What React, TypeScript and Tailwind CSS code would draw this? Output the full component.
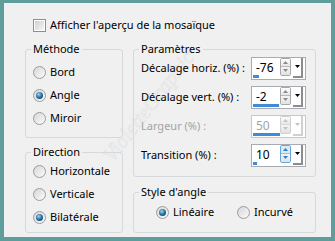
import React from 'react';

function Radio({ checked }: { checked?: boolean }) {
    return (
        <span className="w-[13px] h-[13px] rounded-full border border-[#9c9c9c] bg-[linear-gradient(135deg,#d6d6d6,#fbfbfb)] flex items-center justify-center shrink-0">
            {checked && (
                <span className="w-[7px] h-[7px] rounded-full bg-[radial-gradient(circle_at_40%_35%,#9ad6f7,#1d6597_55%,#0c3a62)]" />
            )}
        </span>
    );
}

function RadioRow({ label, checked }: { label: string; checked?: boolean }) {
    return (
        <div className="flex items-center gap-[4px] h-[16px] whitespace-nowrap">
            <Radio checked={checked} />
            <span>{label}</span>
        </div>
    );
}

function Arrow({ up, color }: { up?: boolean; color: string }) {
    return (
        <svg width="5" height="3" viewBox="0 0 5 3">
            <path d={up ? 'M0 3 L2.5 0 L5 3 Z' : 'M0 0 L2.5 3 L5 0 Z'} fill={color} />
        </svg>
    );
}

function SpinBox({ value, bar, disabled, hot }: { value: string; bar: number; disabled?: boolean; hot?: boolean }) {
    const arrowColor = disabled ? '#c4c4c4' : hot ? '#2f7fc4' : '#8a8a8a';
    return (
        <div className={`relative w-[55px] h-[23px] shrink-0 border bg-white flex items-center ${disabled ? 'border-[#c9c9c9]' : 'border-[#a9abb2]'}`}>
            <span className={`ml-[4px] -mt-[2px] text-[12px] ${disabled ? 'text-[#a3a3a3]' : 'text-black'}`}>{value}</span>
            <div className="ml-auto mr-[2px] -mt-[2px] flex items-start gap-[2px]">
                <div className={`w-[11px] h-[18px] flex flex-col rounded-[2px] border ${disabled ? 'border-[#d0d0d0]' : hot ? 'border-[#6aa6d6]' : 'border-[#a8a8a8]'}`}>
                    <div className={`flex-1 flex items-center justify-center border-b ${disabled ? 'border-[#d8d8d8]' : 'border-[#b8b8b8]'} ${hot ? 'bg-[#d6ebfa]' : 'bg-[linear-gradient(#fdfdfd,#e6e6e6)]'}`}>
                        <Arrow up color={arrowColor} />
                    </div>
                    <div className="flex-1 flex items-center justify-center bg-[linear-gradient(#f4f4f4,#e2e2e2)]">
                        <Arrow color={arrowColor} />
                    </div>
                </div>
                <div className={`w-[10px] h-[20px] bg-white border-r-2 border-b-2 flex items-start justify-center pt-[7px] ${disabled ? 'border-[#d0d0d0]' : 'border-[#8c8c8c]'}`}>
                    <Arrow color={disabled ? '#c4c4c4' : '#000'} />
                </div>
            </div>
            <div className="absolute left-[1px] bottom-[1px] h-[3px] bg-[#3f8bd4]" style={{ width: bar }} />
        </div>
    );
}

function ParamRow({ label, children, disabled }: { label: string; children: React.ReactNode; disabled?: boolean }) {
    return (
        <div className="flex items-center justify-between h-[23px] whitespace-nowrap">
            <span className={disabled ? 'text-[#a3a3a3]' : ''}>{label}</span>
            {children}
        </div>
    );
}

export default function App() {
    return (
        <div className="w-[335px] h-[241px] bg-[#5f9c9c] pt-[3px] pl-[4px] pr-[4px] pb-[4px] font-['Noto_Sans',sans-serif] text-[11px] text-black">
            <div className="relative h-full bg-[#f0f0f0] pl-[21px] pt-[14px] overflow-hidden">
                {/* watermark */}
                <div className="pointer-events-none absolute left-[75px] top-[88px] w-[140px] text-center -rotate-[52deg] text-[21px] italic font-['Liberation_Serif',serif] text-transparent [-webkit-text-stroke:0.5px_#e0e0e0] whitespace-nowrap">
                    VioletteGraphic
                </div>

                <div className="relative flex items-center gap-[4px] h-[16px] ml-[8px]">
                    <span className="w-[13px] h-[13px] border border-[#8e8f8f] bg-white p-[1px] shrink-0">
                        <span className="block w-full h-full bg-[linear-gradient(135deg,#cfcfcf,#f6f6f6)]" />
                    </span>
                    <span>Afficher l'aperçu de la mosaïque</span>
                </div>

                <div className="relative mt-[8px] flex gap-[10px]">
                    <div className="w-[98px] flex flex-col gap-[6px]">
                        <fieldset className="h-[97px] border border-[#d5d9dc] rounded-[3px]">
                            <legend className="ml-[5px] px-[2px] leading-[16px]">Méthode</legend>
                            <div className="pl-[7px] pt-[7px] flex flex-col gap-[7px]">
                                <RadioRow label="Bord" />
                                <RadioRow label="Angle" checked />
                                <RadioRow label="Miroir" />
                            </div>
                        </fieldset>
                        <fieldset className="h-[89px] border border-[#d5d9dc] rounded-[3px]">
                            <legend className="ml-[5px] px-[2px] leading-[16px]">Direction</legend>
                            <div className="pl-[7px] pt-[3px] flex flex-col gap-[7px]">
                                <RadioRow label="Horizontale" />
                                <RadioRow label="Verticale" />
                                <RadioRow label="Bilatérale" checked />
                            </div>
                        </fieldset>
                    </div>

                    <div className="w-[183px] flex flex-col gap-[7px]">
                        <fieldset className="h-[136px] border border-[#d5d9dc] rounded-[3px]">
                            <legend className="ml-[5px] px-[2px] leading-[16px]">Paramètres</legend>
                            <div className="pl-[7px] pr-[9px] flex flex-col gap-[6px]">
                                <ParamRow label="Décalage horiz. (%) :">
                                    <SpinBox value="-76" bar={6} />
                                </ParamRow>
                                <ParamRow label="Décalage vert. (%) :">
                                    <SpinBox value="-2" bar={26} />
                                </ParamRow>
                                <ParamRow label="Largeur (%) :" disabled>
                                    <SpinBox value="50" bar={27} disabled />
                                </ParamRow>
                                <ParamRow label="Transition (%) :">
                                    <SpinBox value="10" bar={4} hot />
                                </ParamRow>
                            </div>
                        </fieldset>
                        <fieldset className="h-[49px] border border-[#d5d9dc] rounded-[3px]">
                            <legend className="ml-[5px] px-[2px] leading-[16px]">Style d'angle</legend>
                            <div className="pl-[22px] pt-[4px] flex items-center">
                                <div className="w-[81px]">
                                    <RadioRow label="Linéaire" checked />
                                </div>
                                <RadioRow label="Incurvé" />
                            </div>
                        </fieldset>
                    </div>
                </div>
            </div>
        </div>
    );
}
